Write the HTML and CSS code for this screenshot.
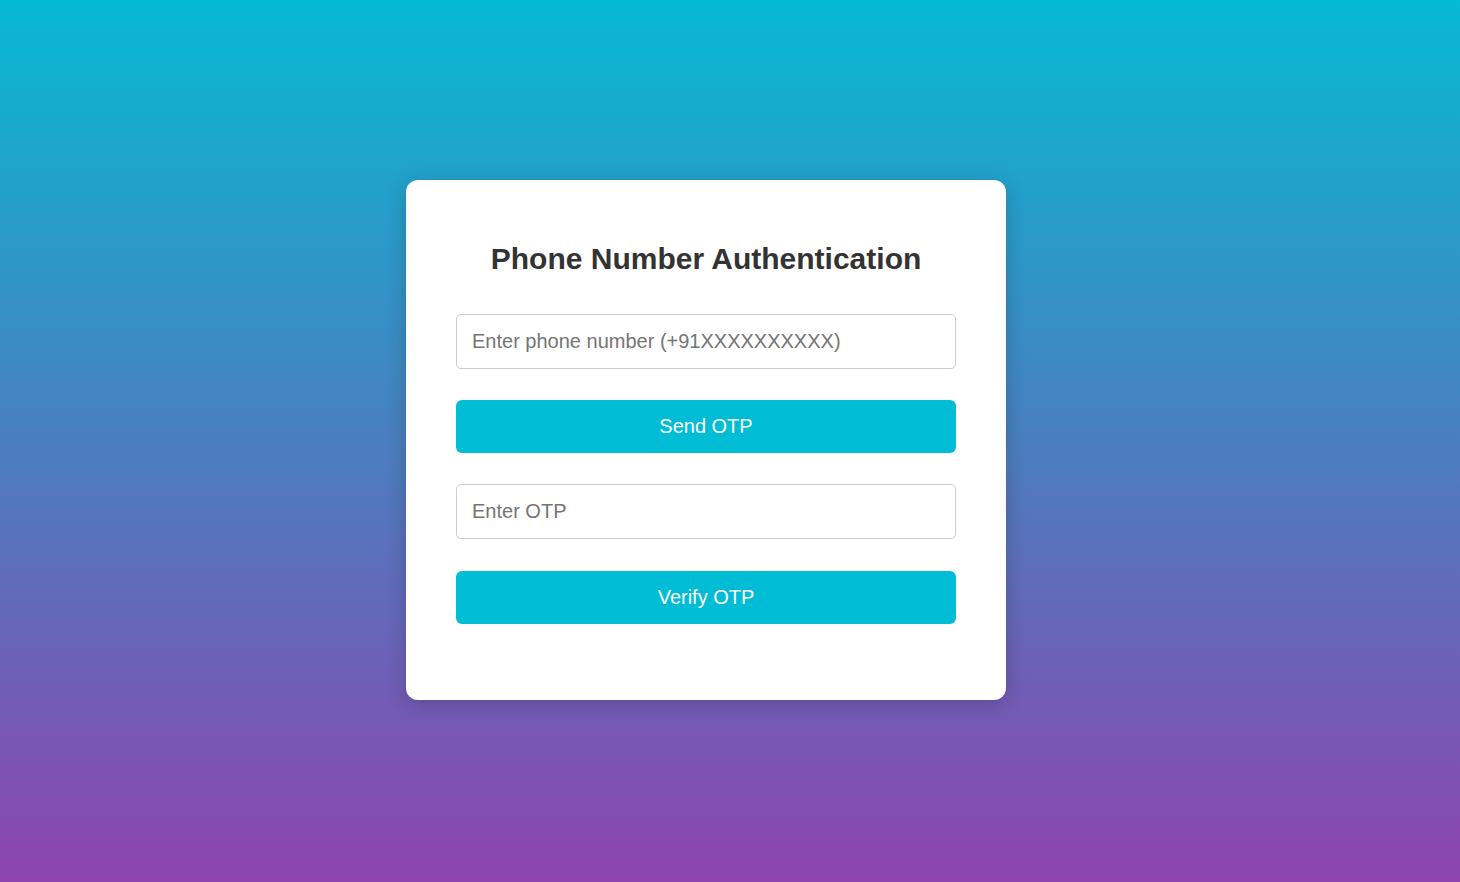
FILE: index.html
```html
<!DOCTYPE html>
<html lang="en">
<head>
<meta charset="utf-8">
<title>Phone Number Authentication</title>
<link rel="stylesheet" href="styles.css">
</head>
<body>
<main class="page">
  <section class="card">
    <h2 class="title">Phone Number Authentication</h2>
    <input class="field" type="text" placeholder="Enter phone number (+91XXXXXXXXXX)">
    <button class="btn">Send OTP</button>
    <input class="field second" type="text" placeholder="Enter OTP">
    <button class="btn last">Verify OTP</button>
  </section>
</main>
</body>
</html>
```

FILE: styles.css
```css
html, body {
  margin: 0;
  padding: 0;
  height: 100%;
}
body {
  font-family: "Liberation Sans", Arial, sans-serif;
  background: linear-gradient(to bottom, #06b9d4, #8e44ad);
}
.page {
  height: 882px;
  display: flex;
  justify-content: center;
  align-items: flex-start;
  padding: 180px 48px 0 0;
  box-sizing: border-box;
}
.card {
  width: 600px;
  box-sizing: border-box;
  background: #fff;
  border-radius: 12px;
  padding: 62px 50px 76px;
  box-shadow: 0 4px 20px rgba(0, 0, 0, 0.2);
  display: flex;
  flex-direction: column;
}
.title {
  margin: 0 0 38px;
  font-size: 30px;
  line-height: 34px;
  font-weight: bold;
  color: #333;
  text-align: center;
}
.field {
  display: block;
  width: 100%;
  box-sizing: border-box;
  height: 55px;
  padding: 15px;
  font-family: inherit;
  font-size: 20px;
  border: 1px solid #ccc;
  border-radius: 5px;
  margin: 0 0 31px;
  color: #333;
  outline: none;
}
.field.second {
  margin-bottom: 32px;
}
.field::placeholder {
  color: #757575;
}
.btn {
  display: block;
  width: 100%;
  height: 53px;
  padding: 0;
  border: none;
  border-radius: 6px;
  background: #00bcd4;
  color: #fff;
  font-family: inherit;
  font-size: 20px;
  margin: 0 0 31px;
  cursor: pointer;
}
.btn.last {
  margin-bottom: 0;
}
```
